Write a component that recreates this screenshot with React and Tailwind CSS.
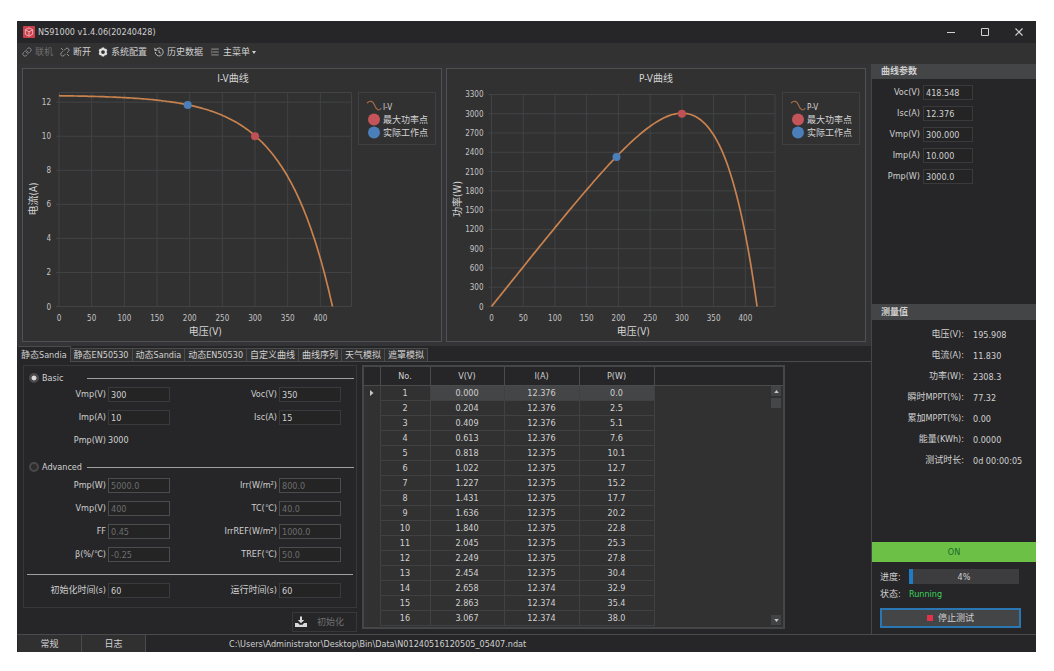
import React, { useState } from "react";

const VOC = 418.548;
const ISC = 12.376;
const C1 = 0.002954;
const C2 = 0.17157;

function currentAt(v) {
  return Math.max(0, ISC * (1 - C1 * (Math.exp(v / (C2 * VOC)) - 1)));
}

const VOLTAGES = Array.from({ length: 141 }, (_, i) => (VOC * i) / 140);

const ROWS = [
  ["1", "0.000", "12.376", "0.0"],
  ["2", "0.204", "12.376", "2.5"],
  ["3", "0.409", "12.376", "5.1"],
  ["4", "0.613", "12.376", "7.6"],
  ["5", "0.818", "12.375", "10.1"],
  ["6", "1.022", "12.375", "12.7"],
  ["7", "1.227", "12.375", "15.2"],
  ["8", "1.431", "12.375", "17.7"],
  ["9", "1.636", "12.375", "20.2"],
  ["10", "1.840", "12.375", "22.8"],
  ["11", "2.045", "12.375", "25.3"],
  ["12", "2.249", "12.375", "27.8"],
  ["13", "2.454", "12.375", "30.4"],
  ["14", "2.658", "12.374", "32.9"],
  ["15", "2.863", "12.374", "35.4"],
  ["16", "3.067", "12.374", "38.0"],
];

const TABS = ["静态Sandia", "静态EN50530", "动态Sandia", "动态EN50530", "自定义曲线", "曲线序列", "天气模拟", "遮罩模拟"];

const CURVE_PARAMS = [
  ["Voc(V)", "418.548"],
  ["Isc(A)", "12.376"],
  ["Vmp(V)", "300.000"],
  ["Imp(A)", "10.000"],
  ["Pmp(W)", "3000.0"],
];

const MEASURED = [
  ["电压(V):", "195.908"],
  ["电流(A):", "11.830"],
  ["功率(W):", "2308.3"],
  ["瞬时MPPT(%):", "77.32"],
  ["累加MPPT(%):", "0.00"],
  ["能量(KWh):", "0.0000"],
  ["测试时长:", "0d 00:00:05"],
];

function Chart({ title, name, yLabel, x0, stepX, right, top, yTicks, unitY, valueAt, maxPoint, workPoint, titleX }) {
  const y0 = 238.5;
  const px = (v) => x0 + (v / 50) * stepX;
  const py = (v) => y0 - v * unitY;
  const points = VOLTAGES.map((v) => `${px(v).toFixed(1)},${py(valueAt(v)).toFixed(1)}`).join(" ");
  const xTicks = [0, 50, 100, 150, 200, 250, 300, 350, 400];
  const midX = (x0 + right) / 2;
  return (
    <section className="min-w-0 flex-1 border border-[#505153] bg-[#313132]">
      <svg viewBox="1 1 418 272" className="block h-auto w-full" role="img" aria-label={title}>
        <g stroke="#424344" strokeWidth="1">
          {xTicks.map((t) => (
            <line key={t} x1={px(t)} x2={px(t)} y1={top} y2={y0} />
          ))}
          {yTicks.map((t) => (
            <line key={t} x1={x0 - 3} x2={right} y1={py(t)} y2={py(t)} />
          ))}
          <line x1={x0} x2={right} y1={top} y2={top} />
          <line x1={right} x2={right} y1={top} y2={y0} />
        </g>
        <g fill="#c4c4c4" fontSize="8">
          {yTicks.map((t) => (
            <text key={t} x={x0 - 8} y={py(t) + 3} textAnchor="end">{t}</text>
          ))}
          {xTicks.map((t) => (
            <text key={t} x={px(t)} y="252.5" textAnchor="middle">{t}</text>
          ))}
        </g>
        <g fill="#d4d4d4" fontSize="10" textAnchor="middle">
          <text x={titleX} y="13.5">{title}</text>
          <text x={midX} y="267">电压(V)</text>
          <text transform="translate(15 131) rotate(-90)">{yLabel}</text>
        </g>
        <polyline points={points} fill="none" stroke="#c8824e" strokeWidth="1.7" strokeLinejoin="round" />
        <circle cx={px(maxPoint[0])} cy={py(maxPoint[1])} r="4" fill="#bf5055" />
        <circle cx={px(workPoint[0])} cy={py(workPoint[1])} r="4" fill="#4b7fba" />
        <rect x="336.5" y="24.5" width="77" height="52" fill="none" stroke="#3f4042" />
        <path d="M345 35c3-3 6-2 7.500 2s4 7 7 3" fill="none" stroke="#a66d48" strokeWidth="1.100" />
        <circle cx="352" cy="51.500" r="6" fill="#c2545a" />
        <circle cx="352" cy="64.500" r="6" fill="#4b7fba" />
        <g fill="#d4d4d4">
          <text x="361" y="41.500" fontSize="8">{name}</text>
          <text x="361" y="54.500" fontSize="9">最大功率点</text>
          <text x="361" y="67.500" fontSize="9">实际工作点</text>
        </g>
      </svg>
    </section>
  );
}

function Field({ label, value, disabled }) {
  return (
    <>
      <label htmlFor={`f-${label}-${value}`} className="pr-[2px] text-right leading-[15px] whitespace-nowrap">
        {label}
      </label>
      <input
        id={`f-${label}-${value}`}
        defaultValue={value}
        disabled={disabled}
        className="h-[15px] w-full min-w-0 border border-[#3a3a3c] bg-[#242425] px-[2px] text-[#d0d0d0] outline-none disabled:border-[#4b4c4e] disabled:text-[#6d6d6d]"
      />
    </>
  );
}

const FIELD_GRID = "grid grid-cols-[84px_62px_1fr_62px] gap-y-[8px] pr-[15px]";

function Mode({ id, checked, onChange, children }) {
  return (
    <div className="flex h-[12px] items-center pl-[5px] pr-[2px]">
      <input
        type="radio"
        name="mode"
        id={id}
        checked={checked}
        onChange={onChange}
        className="h-[10px] w-[10px] shrink-0 appearance-none rounded-full border-2 border-[#4a4a4c] bg-[#2d2d2e] checked:bg-[radial-gradient(circle,#d8d8d8_0_2px,#3a3a3b_3px)]"
      />
      <label htmlFor={id} className="w-[48px] shrink-0 pl-[3px]">{children}</label>
      <span className="h-px flex-1 bg-[#a0a0a0]" />
    </div>
  );
}

function SettingsForm() {
  const [mode, setMode] = useState("basic");
  return (
    <form className="flex w-[334px] shrink-0 flex-col" onSubmit={(e) => e.preventDefault()}>
      <div className="border border-[#38383a] pb-[9px] pt-[6px]">
        <Mode id="basic" checked={mode === "basic"} onChange={() => setMode("basic")}>Basic</Mode>
        <div className={`${FIELD_GRID} mt-[3px]`}>
          <Field label="Vmp(V)" value="300" />
          <Field label="Voc(V)" value="350" />
          <Field label="Imp(A)" value="10" />
          <Field label="Isc(A)" value="15" />
          <span className="pr-[2px] text-right leading-[15px]">Pmp(W)</span>
          <output className="leading-[15px]">3000</output>
        </div>
        <div className="mt-[13px]">
          <Mode id="advanced" checked={mode === "advanced"} onChange={() => setMode("advanced")}>Advanced</Mode>
        </div>
        <div className={`${FIELD_GRID} mt-[5px]`}>
          <Field label="Pmp(W)" value="5000.0" disabled />
          <Field label="Irr(W/m²)" value="800.0" disabled />
          <Field label="Vmp(V)" value="400" disabled />
          <Field label="TC(℃)" value="40.0" disabled />
          <Field label="FF" value="0.45" disabled />
          <Field label="IrrREF(W/m²)" value="1000.0" disabled />
          <Field label="β(%/℃)" value="-0.25" disabled />
          <Field label="TREF(℃)" value="50.0" disabled />
        </div>
        <hr className="mx-[3px] mb-[8px] mt-[12px] border-t border-[#a0a0a0]" />
        <div className={FIELD_GRID}>
          <Field label="初始化时间(s)" value="60" />
          <Field label="运行时间(s)" value="60" />
        </div>
      </div>
      <button disabled className="mt-[4px] flex h-[20px] w-[65px] items-center justify-between self-end border border-[#38383a] pl-[2px] pr-[12px] text-[#707070]">
        <svg viewBox="0 0 12 12" className="h-[12px] w-[12px]" fill="#d8d8d8">
          <path d="M5 .5h2v3.500h2.200L6 7.200 2.800 4H5zM0 7h3l1.500 1.700h3L9 7h3v4H0z" />
        </svg>
        初始化
      </button>
    </form>
  );
}

function DataTable() {
  return (
    <div className="relative h-[264px] min-w-0 max-w-[423px] flex-1 overflow-hidden border-2 border-[#454648] bg-[#313132]">
      <table className="w-full table-fixed border-collapse text-center">
        <colgroup>
          <col className="w-[16px]" />
          <col className="w-[50px]" />
          <col className="w-[74px]" />
          <col className="w-[75px]" />
          <col className="w-[75px]" />
          <col />
        </colgroup>
        <thead>
          <tr className="h-[18px] bg-[#262628]">
            <th className="border-r border-b border-[#4a4b4d] p-0" />
            {["No.", "V(V)", "I(A)", "P(W)"].map((h) => (
              <th key={h} className="border-r border-b border-[#4a4b4d] p-0 font-normal leading-[12px]">{h}</th>
            ))}
            <th className="border-b border-[#4a4b4d] p-0" />
          </tr>
        </thead>
        <tbody>
          {ROWS.map((r, i) => (
            <tr key={r[0]} className="h-[15px]">
              <td className="border-r border-[#404142] p-0 leading-[12px]">
                {i === 0 && (
                  <svg viewBox="0 0 4 6" className="mx-auto h-[6px] w-[4px]" fill="#c8c8c8">
                    <path d="M0 0l3.500 3L0 6z" />
                  </svg>
                )}
              </td>
              <td className="border-r border-b border-[#404142] p-0 leading-[12px]">{r[0]}</td>
              {r.slice(1).map((c, j) => (
                <td key={j} className={i === 0 ? "border-r border-b border-[#404142] bg-[#444547] p-0 leading-[12px]" : "border-r border-b border-[#404142] p-0 leading-[12px]"}>{c}</td>
              ))}
              <td className="p-0" />
            </tr>
          ))}
        </tbody>
      </table>
      <div className="absolute top-[19px] right-[2px] bottom-0 flex w-[10px] flex-col">
        <button aria-label="Scroll up" className="grid h-[10px] place-items-center bg-[#424345]">
          <svg viewBox="0 0 6 4" className="h-[3px] w-[5px]" fill="#c8c8c8"><path d="M0 4l3-4 3 4z" /></svg>
        </button>
        <span className="mt-[2px] h-[10px] bg-[#454648]" />
        <button aria-label="Scroll down" className="mt-auto mb-[2px] grid h-[10px] place-items-center bg-[#424345]">
          <svg viewBox="0 0 6 4" className="h-[3px] w-[5px]" fill="#c8c8c8"><path d="M0 0l3 4 3-4z" /></svg>
        </button>
      </div>
    </div>
  );
}

function TitleBar() {
  return (
    <header className="flex h-[22px] items-center bg-[#262628] pl-[6px]">
      <svg viewBox="0 0 12 12" className="h-[12px] w-[12px]">
        <rect width="12" height="12" rx="1" fill="#c93f4c" />
        <path d="M6 1.800l3.700 2v4.400L6 10.200l-3.700-2V3.800zM2.300 3.800L6 5.800l3.700-2M6 5.800v4.400" fill="none" stroke="#f2b9bd" strokeWidth=".9" />
      </svg>
      <h1 className="ml-[3px]">NS91000 v1.4.06(20240428)</h1>
      <div className="ml-auto flex">
        <button aria-label="Minimize" className="grid h-[22px] w-[34px] place-items-center">
          <svg viewBox="0 0 8 8" className="h-[8px] w-[8px]" stroke="#d0d0d0"><path d="M0 4.500h8" /></svg>
        </button>
        <button aria-label="Maximize" className="grid h-[22px] w-[34px] place-items-center">
          <svg viewBox="0 0 8 8" className="h-[8px] w-[8px]" fill="none" stroke="#d0d0d0"><path d="M.5.5h7v7h-7z" /></svg>
        </button>
        <button aria-label="Close" className="grid h-[22px] w-[34px] place-items-center">
          <svg viewBox="0 0 8 8" className="h-[8px] w-[8px]" stroke="#d0d0d0" strokeWidth="1.200"><path d="M.5.5l7 7M7.500.5l-7 7" /></svg>
        </button>
      </div>
    </header>
  );
}

function Toolbar() {
  const icon = "h-[10px] w-[10px] shrink-0";
  return (
    <nav className="flex h-[21px] items-center gap-[7px] bg-[#323233] pb-[3px] pl-[5px]">
      <button disabled className="flex items-center gap-[3px] text-[#707070]">
        <svg viewBox="0 0 24 24" className={icon} fill="none" stroke="#85878a" strokeWidth="2.400" strokeLinecap="round">
          <path d="M10 13a5 5 0 0 0 7.540.540l3-3a5 5 0 0 0-7.070-7.070l-1.720 1.710M14 11a5 5 0 0 0-7.540-.540l-3 3a5 5 0 0 0 7.070 7.070l1.710-1.710" />
        </svg>
        联机
      </button>
      <button className="flex items-center gap-[3px]">
        <svg viewBox="0 0 24 24" className={icon} fill="none" stroke="#9a9a9a" strokeWidth="2.200" strokeLinecap="round">
          <path d="M10 8l4-4a4.600 4.600 0 0 1 6.500 6.500l-3 3M13 17l-3.500 3.500A4.600 4.600 0 0 1 3 14l3.500-3.500M3 3l3.500 3.500M17.500 17.500L21 21" />
        </svg>
        断开
      </button>
      <button className="flex items-center gap-[3px]">
        <svg viewBox="0 0 24 24" className={icon} fill="#e2e2e2" fillRule="evenodd">
          <path d="M9.500 1h5l1.600 3.200 3.700-.2 2.500 4.300L20.400 12l1.900 3.700-2.500 4.300-3.700-.2L14.500 23h-5l-1.600-3.200-3.700.2-2.500-4.300L3.600 12 1.700 8.300 4.200 4l3.700.2zM12 7.500a4.500 4.500 0 1 0 0 9 4.500 4.500 0 0 0 0-9z" />
        </svg>
        系统配置
      </button>
      <button className="flex items-center gap-[3px]">
        <svg viewBox="0 0 24 24" className={icon} fill="none" stroke="#c4c4c4" strokeWidth="2.200">
          <path d="M3 12a9.500 9.500 0 1 0 3-7L2 8M2 2v6h6M12 7v6l4.500 2" />
        </svg>
        历史数据
      </button>
      <button className="flex items-center gap-[3px]">
        <svg viewBox="0 0 24 24" className={icon} fill="none" stroke="#a8a8a8" strokeWidth="2">
          <path d="M3 5h18M7 12h14M3 19h18" />
          <path d="M2 9l4 3-4 3" strokeWidth="1.500" />
        </svg>
        主菜单
        <svg viewBox="0 0 4 3" className="-ml-px h-[3px] w-[4px]" fill="#d0d0d0"><path d="M0 0h4L2 3z" /></svg>
      </button>
    </nav>
  );
}

function Sidebar() {
  return (
    <aside className="flex w-[165px] shrink-0 flex-col border-l border-[#454648] bg-[#262628]">
      <h2 className="h-[15px] bg-[#444547] pl-[9px] font-bold leading-[15px]">曲线参数</h2>
      <div className="grid h-[225px] grid-cols-[48px_50px] content-start gap-x-[3px] gap-y-[6px] pt-[6px]">
        {CURVE_PARAMS.map(([label, value]) => (
          <React.Fragment key={label}>
            <label htmlFor={`p-${label}`} className="text-right leading-[15px]">{label}</label>
            <input id={`p-${label}`} readOnly value={value} className="h-[15px] w-full min-w-0 border border-[#3a3a3c] bg-[#242425] px-[2px] outline-none" />
          </React.Fragment>
        ))}
      </div>
      <h2 className="h-[16px] bg-[#444547] pl-[9px] font-bold leading-[17px]">测量值</h2>
      <dl className="grid grid-cols-[92px_1fr] gap-x-[9px] pt-[4px] leading-[21px]">
        {MEASURED.map(([label, value]) => (
          <React.Fragment key={label}>
            <dt className="text-right">{label}</dt>
            <dd className="pt-[2px] leading-[19px]">{value}</dd>
          </React.Fragment>
        ))}
      </dl>
      <div className="mt-auto flex h-[20px] items-center justify-center bg-[#6cc045] text-[#176b2c]">ON</div>
      <div className="px-[8px] pb-[6px] pt-[7px]">
        <div className="flex items-center">
          <span className="w-[29px]">进度:</span>
          <div role="progressbar" aria-valuenow={4} aria-valuemin={0} aria-valuemax={100} aria-label="进度" className="relative mr-[9px] h-[15px] flex-1 bg-[#3d3d3f] text-center leading-[16px]">
            <span className="absolute inset-y-0 left-0 w-[4%] bg-[#1f7bc6]" />
            4%
          </div>
        </div>
        <div className="flex h-[20px] items-center">
          <span className="w-[29px]">状态:</span>
          <span className="text-[#3bd15c]">Running</span>
        </div>
        <button className="mr-[8px] mt-[4px] flex h-[20px] w-[141px] items-center justify-center gap-[5px] border-2 border-[#2a77b4] bg-[#444547]">
          <span className="h-[6px] w-[6px] bg-[#e03349]" />
          停止测试
        </button>
      </div>
    </aside>
  );
}

export default function App() {
  const [tab, setTab] = useState(TABS[0]);
  return (
    <div className="min-h-screen bg-white pt-[21px] pr-[18px] pb-[19px] pl-[17px]">
      <div className="bg-[#343436] font-['DejaVu_Sans_Condensed','Noto_Sans','Noto_Sans_CJK_SC',sans-serif] text-[9px] leading-[12px] text-[#d0d0d0]">
        <TitleBar />
        <Toolbar />
        <div className="flex">
          <main className="flex min-w-0 flex-1 flex-col">
            <div className="flex items-start gap-[4px] pt-[4px] pr-[5px] pb-[4px] pl-[5px]">
              <Chart
                title="I-V曲线" name="I-V" yLabel="电流(A)" titleX={211}
                x0={37} stepX={32.67} right={329.5} top={24.5}
                yTicks={[0, 2, 4, 6, 8, 10, 12]} unitY={17.03}
                valueAt={currentAt} maxPoint={[300, 10]} workPoint={[197, 11.83]}
              />
              <Chart
                title="P-V曲线" name="P-V" yLabel="功率(W)" titleX={210}
                x0={45.5} stepX={31.73} right={329} top={26.5}
                yTicks={[0, 300, 600, 900, 1200, 1500, 1800, 2100, 2400, 2700, 3000, 3300]} unitY={0.06425}
                valueAt={(v) => v * currentAt(v)} maxPoint={[300, 3000]} workPoint={[197, 2325]}
              />
            </div>
            <div role="tablist" className="flex h-[16px] items-end bg-[#262628] pl-px">
              {TABS.map((t) => (
                <button
                  key={t}
                  role="tab"
                  aria-selected={tab === t}
                  onClick={() => setTab(t)}
                  className={tab === t
                    ? "h-[16px] border-t border-r border-[#4a4b4d] px-[3px] whitespace-nowrap"
                    : "h-[14px] border-t border-r border-b border-[#4a4b4d] bg-[#303031] px-[3px] whitespace-nowrap"}
                >
                  {t}
                </button>
              ))}
              <span className="flex-1 self-stretch border-b border-[#4a4b4d]" />
            </div>
            <div className="flex flex-1 items-start gap-[5px] bg-[#262628] pt-[3px] pr-[5px] pb-[2px] pl-[6px]">
              <SettingsForm />
              <DataTable />
            </div>
          </main>
          <Sidebar />
        </div>
        <footer className="flex h-[18px] items-stretch border-t border-[#4a4b4d] bg-[#262628] pl-px">
          <button className="w-[64px] border-r border-[#4a4b4d] bg-[#303031]">常规</button>
          <button className="w-[64px] border-r border-[#4a4b4d] bg-[#303031]">日志</button>
          <span className="self-center pl-[83px]">C:\Users\Administrator\Desktop\Bin\Data\N01240516120505_05407.ndat</span>
        </footer>
      </div>
    </div>
  );
}
